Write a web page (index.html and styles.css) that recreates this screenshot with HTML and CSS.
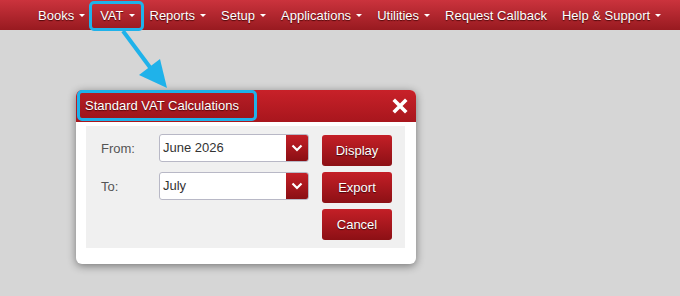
FILE: index.html
```html
<!DOCTYPE html>
<html lang="en">
<head>
    <meta charset="UTF-8">
    <title>Standard VAT Calculations</title>
    <link rel="stylesheet" href="styles.css">
</head>
<body>
    <div class="topbar">
        <a class="nav-item">Books <span class="caret"></span></a>
        <a class="nav-item marked">VAT <span class="caret"></span></a>
        <a class="nav-item">Reports <span class="caret"></span></a>
        <a class="nav-item">Setup <span class="caret"></span></a>
        <a class="nav-item">Applications <span class="caret"></span></a>
        <a class="nav-item">Utilities <span class="caret"></span></a>
        <a class="nav-item">Request Callback</a>
        <a class="nav-item">Help &amp; Support <span class="caret"></span></a>
    </div>

    <!-- callout arrow from the menu to the dialog -->
    <svg class="pointer" width="680" height="296" viewBox="0 0 680 296">
        <line x1="123" y1="31" x2="152" y2="70" stroke="#1fb2ea" stroke-width="4"/>
        <polygon points="167,88 139,75 160,59" fill="#1fb2ea"/>
    </svg>

    <div class="dialog">
        <div class="dialog-head">
            <span class="dialog-title">Standard VAT Calculations</span>
            <span class="close">
                <svg width="16" height="16" viewBox="0 0 16 16">
                    <path d="M3 3 L13 13 M13 3 L3 13" stroke="#fff" stroke-width="3.6" stroke-linecap="square"/>
                </svg>
            </span>
        </div>
        <div class="dialog-body">
            <div class="panel">
                <div class="fields">
                    <div class="field">
                        <label>From:</label>
                        <div class="select">
                            <span class="select-text">June 2026</span>
                            <span class="select-btn">
                                <svg width="12" height="8" viewBox="0 0 12 8"><path d="M1.5 1.5 L6 6 L10.5 1.5" fill="none" stroke="#fff" stroke-width="2.2"/></svg>
                            </span>
                        </div>
                    </div>
                    <div class="field">
                        <label>To:</label>
                        <div class="select">
                            <span class="select-text">July</span>
                            <span class="select-btn">
                                <svg width="12" height="8" viewBox="0 0 12 8"><path d="M1.5 1.5 L6 6 L10.5 1.5" fill="none" stroke="#fff" stroke-width="2.2"/></svg>
                            </span>
                        </div>
                    </div>
                </div>
                <div class="actions">
                    <button class="btn">Display</button>
                    <button class="btn">Export</button>
                    <button class="btn">Cancel</button>
                </div>
            </div>
        </div>
    </div>
</body>
</html>
```

FILE: styles.css
```css
body { margin: 0; height: 296px; overflow: hidden; position: relative; background: #d6d6d6; font-family: "Liberation Sans", Arial, sans-serif; font-size: 13px; }
.topbar { display: flex; height: 30px; padding-left: 30px; background: linear-gradient(#cb333d, #981a20); }
.nav-item { position: relative; display: flex; align-items: center; padding: 0 7px 0 8px; color: #fff; text-shadow: 0 1px 1px rgba(50,0,0,.8); white-space: nowrap; }
.caret { width: 0; height: 0; margin-left: 5px; border-top: 3px solid #fff; border-left: 3px solid transparent; border-right: 3px solid transparent; }
.marked::after { content: ""; position: absolute; top: 1px; bottom: -1px; left: -3px; right: -2px; border: 3px solid #1fb2ea; border-radius: 5px; }
.pointer { position: absolute; top: 0; left: 0; pointer-events: none; }

.dialog { width: 340px; height: 174px; margin: 60px 0 0 76px; background: #fff; border-radius: 6px; box-shadow: 0 2px 9px rgba(0,0,0,.45); }
.dialog-head { display: flex; justify-content: space-between; align-items: center; height: 32px; padding: 0 8px 0 1px; background: linear-gradient(#c82129, #a8161d); border-radius: 6px 6px 0 0; }
.dialog-title { align-self: flex-start; box-sizing: border-box; width: 180px; height: 31px; padding-left: 5px; line-height: 25px; color: #fff; background: rgba(0,0,0,.08); border: 3px solid #1fb2ea; border-radius: 5px; text-shadow: 0 1px 1px rgba(40,0,0,.7); }
.close { display: flex; }
.dialog-body { padding: 4px 11px 16px 10px; }
.panel { display: flex; justify-content: space-between; padding: 8px 13px 8px 15px; background: #f0f0f0; }
.fields { display: flex; flex-direction: column; gap: 10px; }
.field { display: flex; height: 28px; }
.field label { width: 58px; padding-top: 7px; color: #555; }
.select { display: flex; box-sizing: border-box; width: 150px; height: 28px; background: #fff; border: 1px solid #b8b8c6; border-radius: 3px; overflow: hidden; }
.select-text { flex: 1; padding-left: 3px; line-height: 26px; color: #333; }
.select-btn { display: flex; align-items: center; justify-content: center; width: 22px; background: linear-gradient(#c41f27, #8a0f14); }
.actions { display: flex; flex-direction: column; gap: 6px; margin-top: 1px; }
.btn { width: 70px; height: 31px; padding: 0; border: none; border-radius: 3px; background: linear-gradient(#c41f27, #8c1015); color: #fff; font-family: inherit; font-size: 13px; text-shadow: 0 1px 1px rgba(0,0,0,.6); }
```
